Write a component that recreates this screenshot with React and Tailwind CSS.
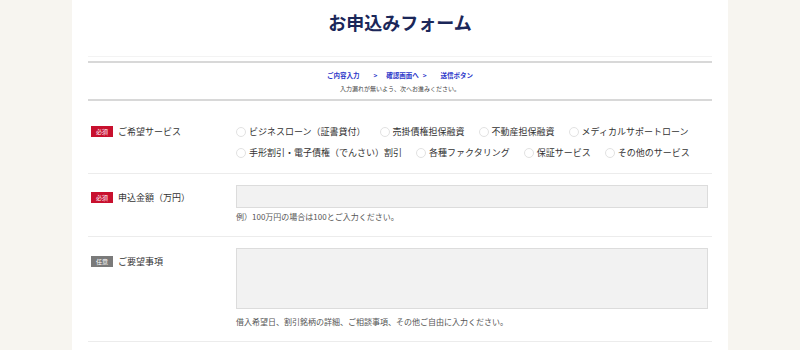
import React from 'react';

const font = { fontFamily: '"Noto Sans CJK JP", "Noto Sans", sans-serif' };

const services = [
  ['ビジネスローン（証書貸付）', '売掛債権担保融資', '不動産担保融資', 'メディカルサポートローン'],
  ['手形割引・電子債権（でんさい）割引', '各種ファクタリング', '保証サービス', 'その他のサービス'],
];

function Badge({ required }) {
  return (
    <span
      className={
        required
          ? 'inline-flex h-[11px] w-[22px] items-center justify-center bg-[#c8102e] text-[6px] leading-none text-white'
          : 'inline-flex h-[11px] w-[22px] items-center justify-center bg-[#7a7a7a] text-[6px] leading-none text-white'
      }
    >
      {required ? '必須' : '任意'}
    </span>
  );
}

function Label({ required, children }) {
  return (
    <div className="flex h-[21px] items-center gap-[5px] pl-[3px]">
      <Badge required={required} />
      <span className="text-[9px] text-[#333]">{children}</span>
    </div>
  );
}

function Radio({ label }) {
  return (
    <label className="flex h-[21px] items-center gap-[3px]">
      <span className="h-[10px] w-[10px] rounded-full border border-[#e2e2e2] bg-white" />
      <span className="text-[9px] text-[#333]">{label}</span>
    </label>
  );
}

export default function App() {
  return (
    <div className="min-h-[350px] bg-[#f7f5f0]" style={font}>
      <div className="mx-auto min-h-[350px] w-[656px] bg-white px-4">
        <div className="h-[57px] border-b border-[#f3f3f3] pt-[10px]">
          <h1 className="text-center text-[18px] font-bold leading-[24px] text-[#1b2759]">お申込みフォーム</h1>
        </div>

        <div className="mt-[4px] border-y-2 border-[#d8d8d8] pb-[5px] pt-[7px] text-center">
          <div className="flex items-center justify-center text-[6.5px] font-bold leading-[10px] text-[#2b36c9]">
            <span>ご内容入力</span>
            <span className="ml-[14px]">&gt;</span>
            <span className="ml-[9px]">確認画面へ</span>
            <span className="ml-[4px]">&gt;</span>
            <span className="ml-[14px]">送信ボタン</span>
          </div>
          <p className="mt-[4px] text-[6px] leading-[10px] text-[#444]">入力漏れが無いよう、次へお進みください。</p>
        </div>

        <div className="flex border-b border-[#ececec] pb-[10px] pt-[20px]">
          <div className="w-[148px] shrink-0">
            <Label required>ご希望サービス</Label>
          </div>
          <div className="flex flex-col">
            {services.map((row, i) => (
              <div key={i} className="flex gap-x-[14px]">
                {row.map((s) => (
                  <Radio key={s} label={s} />
                ))}
              </div>
            ))}
          </div>
        </div>

        <div className="flex border-b border-[#ececec] pb-[13px] pt-[11px]">
          <div className="w-[148px] shrink-0 pt-[2px]">
            <Label required>申込金額（万円）</Label>
          </div>
          <div className="flex flex-col">
            <div className="h-[23px] w-[472px] border border-[#dcdcdc] bg-[#f2f2f2]" />
            <p className="mt-[3px] text-[8px] leading-[12px] text-[#555]">例）100万円の場合は100とご入力ください。</p>
          </div>
        </div>

        <div className="flex border-b border-[#ececec] pb-[13px] pt-[11px]">
          <div className="w-[148px] shrink-0 pt-[3px]">
            <Label>ご要望事項</Label>
          </div>
          <div className="flex flex-col">
            <div className="h-[61px] w-[472px] border border-[#dcdcdc] bg-[#f2f2f2]" />
            <p className="mt-[7px] text-[8px] leading-[12px] text-[#555]">
              借入希望日、割引銘柄の詳細、ご相談事項、その他ご自由に入力ください。
            </p>
          </div>
        </div>
      </div>
    </div>
  );
}
